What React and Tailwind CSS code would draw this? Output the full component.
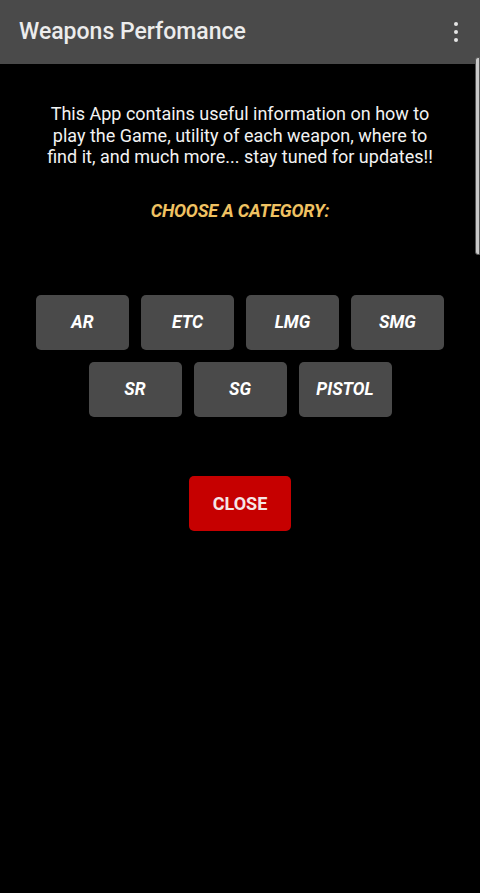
const row1 = ['AR', 'ETC', 'LMG', 'SMG']
const row2 = ['SR', 'SG', 'PISTOL']

function CategoryButton({ label }) {
  return (
    <button className="h-[55px] w-[93px] rounded-[5px] bg-[#4a4a4a] text-[17.5px] font-bold italic text-white">
      {label}
    </button>
  )
}

export default function App() {
  return (
    <div className="relative min-h-[893px] bg-black text-white" style={{ fontFamily: 'Roboto, "Noto Sans", sans-serif' }}>
      {/* Toolbar */}
      <div className="flex h-[64px] items-center justify-between bg-[#4a4a4a] pl-[19px] pr-[22px]">
        <h1 className="pt-[1px] text-[23px] font-medium text-[#ececec]">Weapons Perfomance</h1>
        <div className="flex flex-col items-center gap-[4px]">
          <span className="h-[4px] w-[4px] rounded-full bg-[#e5e5e5]" />
          <span className="h-[4px] w-[4px] rounded-full bg-[#e5e5e5]" />
          <span className="h-[4px] w-[4px] rounded-full bg-[#e5e5e5]" />
        </div>
      </div>

      {/* Scrollbar thumb */}
      <div className="absolute right-0 top-[57px] h-[198px] w-[5px] rounded-l-[3px] border border-[#555] bg-[#c9c9c9]" />

      <div className="flex flex-col items-center">
        <p className="mt-[39px] w-[400px] text-center text-[18px] leading-[21.5px] text-[#f2f2f2]">
          This App contains useful information on how to play the Game, utility of each weapon, where to find it, and much more... stay tuned for updates!!
        </p>
        <div className="mt-[29px] text-[18px] font-bold italic tracking-[-0.2px] text-[#f0c262]">CHOOSE A CATEGORY:</div>

        <div className="mt-[71px] flex flex-col items-center gap-[12px]">
          <div className="flex gap-[12px]">
            {row1.map((l) => (
              <CategoryButton key={l} label={l} />
            ))}
          </div>
          <div className="flex gap-[12px]">
            {row2.map((l) => (
              <CategoryButton key={l} label={l} />
            ))}
          </div>
        </div>

        <button className="mt-[59px] h-[55px] w-[102px] rounded-[5px] bg-[#c60000] text-[18px] font-bold text-[#f5e6e6]">
          CLOSE
        </button>
      </div>
    </div>
  )
}
